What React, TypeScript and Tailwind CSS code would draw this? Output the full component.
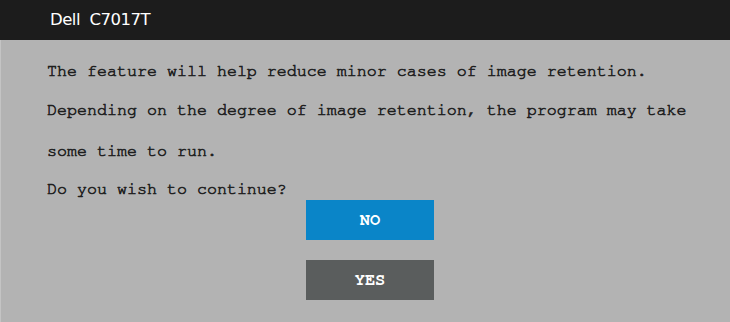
import React from "react";

export default function App() {
  const mono = { fontFamily: 'FreeMono, "Liberation Mono", "Courier New", monospace' };
  return (
    <div className="w-[730px] h-[322px] bg-[#b3b3b3] flex flex-col overflow-hidden">
      <div className="h-[40px] bg-[#1c1c1c] flex items-center pl-[50px] shrink-0">
        <span
          className="text-white text-[16.5px] whitespace-pre tracking-[-0.5px]"
          style={{ fontFamily: '"DejaVu Sans", Verdana, sans-serif' }}
        >
          Dell  C7017T
        </span>
      </div>
      <div className="flex-1 flex flex-col pl-[46px] pt-[21px] border-l border-[#c4c4c4]">
        <div
          className="flex flex-col text-[16.67px] leading-[20px] text-[#1e1e1e] [-webkit-text-stroke:0.6px_#1e1e1e]"
          style={mono}
        >
          <div className="h-[20px] whitespace-pre">The feature will help reduce minor cases of image retention.</div>
          <div className="h-[20px] mt-[19px] whitespace-pre">Depending on the degree of image retention, the program may take</div>
          <div className="h-[20px] mt-[21px] whitespace-pre">some time to run.</div>
          <div className="h-[20px] mt-[18px] whitespace-pre">Do you wish to continue?</div>
        </div>
        <div className="flex flex-col gap-[20px] pl-[259px] mt-px">
          <div
            className="w-[128px] h-[40px] bg-[#0a85c8] text-white font-bold text-[17px] flex items-center justify-center"
            style={mono}
          >
            NO
          </div>
          <div
            className="w-[128px] h-[40px] bg-[#5a5d5d] text-white font-bold text-[17px] flex items-center justify-center"
            style={mono}
          >
            YES
          </div>
        </div>
      </div>
    </div>
  );
}
